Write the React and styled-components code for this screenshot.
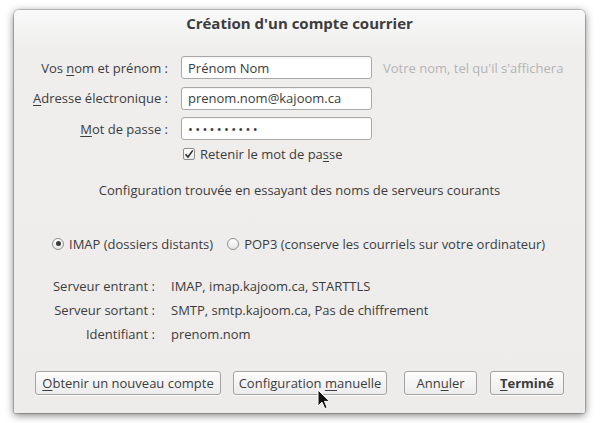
import styled, { createGlobalStyle } from "styled-components";

const GlobalStyle = createGlobalStyle`
  html, body {
    margin: 0;
    padding: 0;
    background: #ffffff;
  }
  body {
    font-family: "Open Sans", "Liberation Sans", sans-serif;
    font-size: 13px;
    color: #3c3c3c;
  }
`;

const Screen = styled.div`
  width: 600px;
  height: 423px;
  padding: 10px 15px 0 14px;
  box-sizing: border-box;
  position: relative;
  overflow: hidden;
`;

const Dialog = styled.div`
  width: 571px;
  height: 403px;
  box-sizing: border-box;
  padding: 4px 0 0;
  display: flex;
  flex-direction: column;
  border-radius: 5px 5px 2px 2px;
  background: linear-gradient(#f9f9f9 0px, #efeeed 40px, #edeceb 100%);
  box-shadow: 0 0 0 1px rgba(0, 0, 0, 0.18), 0 2px 9px rgba(0, 0, 0, 0.55);
`;

const Title = styled.div`
  height: 18px;
  line-height: 18px;
  text-align: center;
  font-weight: bold;
  font-size: 15px;
  color: #3c3c3c;
`;

const Form = styled.div`
  margin-top: 24px;
  display: grid;
  grid-template-columns: 156px 191px 1fr;
  column-gap: 11px;
  row-gap: 7.5px;
  align-items: center;
`;

const Label = styled.label`
  text-align: right;
  padding-right: 2px;
  white-space: nowrap;
`;

const Key = styled.span`
  text-decoration: underline;
  text-underline-offset: 2px;
`;

const Field = styled.input`
  height: 23px;
  box-sizing: border-box;
  border: 1px solid #a9a9a9;
  border-radius: 3px;
  background: #ffffff;
  padding: 0 6px;
  font-family: inherit;
  font-size: 13px;
  color: #3c3c3c;
  letter-spacing: ${(p) => (p.$spread ? "2.3px" : "0")};
  box-shadow: inset 0 1px 1px rgba(0, 0, 0, 0.06);
  outline: none;
`;

const Hint = styled.span`
  color: #b4b4b4;
  white-space: nowrap;
`;

const CheckRow = styled.div`
  grid-column: 2 / 4;
  display: flex;
  align-items: center;
  gap: 5px;
  padding-left: 2px;
  height: 13px;
`;

const Box = styled.span`
  width: 12px;
  height: 12px;
  box-sizing: border-box;
  border: 1px solid #8c8c8c;
  border-radius: 2px;
  background: linear-gradient(#ffffff, #e9e9e9);
  display: flex;
  align-items: center;
  justify-content: center;
`;

const Notice = styled.div`
  margin-top: 21px;
  line-height: 16px;
  text-align: center;
`;

const RadioRow = styled.div`
  margin-top: 38px;
  padding-left: 38px;
  display: flex;
  align-items: center;
  line-height: 16px;
`;

const RadioItem = styled.div`
  display: flex;
  align-items: center;
  gap: 5px;
  margin-right: 14px;
`;

const Radio = styled.span`
  width: 12px;
  height: 12px;
  box-sizing: border-box;
  border-radius: 50%;
  border: 1px solid #8e8e8e;
  background: linear-gradient(#ffffff, #e6e6e6);
  display: flex;
  align-items: center;
  justify-content: center;
  &::after {
    content: "";
    width: 5px;
    height: 5px;
    border-radius: 50%;
    background: ${(p) => (p.$on ? "#3a3a3a" : "transparent")};
  }
`;

const Servers = styled.div`
  margin-top: 26px;
  display: grid;
  grid-template-columns: 141px 1fr;
  column-gap: 16px;
  row-gap: 8px;
  line-height: 16px;
`;

const ServerLabel = styled.span`
  text-align: right;
  white-space: nowrap;
`;

const Buttons = styled.div`
  margin-top: 29px;
  padding: 0 21px;
  display: flex;
  align-items: center;
`;

const Button = styled.button`
  width: ${(p) => p.$w}px;
  margin-left: ${(p) => p.$gap || 0}px;
  height: 24px;
  box-sizing: border-box;
  padding: 0;
  border: 1px solid #a3a3a3;
  border-radius: 3px;
  background: linear-gradient(#fcfcfc, #ececec);
  box-shadow: 0 1px 0 rgba(255, 255, 255, 0.8), inset 0 1px 0 #ffffff;
  font-family: inherit;
  font-size: 13px;
  font-weight: ${(p) => (p.$bold ? "bold" : "normal")};
  color: #3c3c3c;
  white-space: nowrap;
`;

const Cursor = styled.svg`
  position: absolute;
  left: 317px;
  top: 389px;
`;

function App() {
  return (
    <Screen>
      <GlobalStyle />
      <Dialog>
        <Title>Création d'un compte courrier</Title>
        <Form>
          <Label>
            Vos <Key>n</Key>om et prénom :
          </Label>
          <Field readOnly defaultValue="Prénom Nom" />
          <Hint>Votre nom, tel qu'il s'affichera</Hint>

          <Label>
            <Key>A</Key>dresse électronique :
          </Label>
          <Field readOnly defaultValue="prenom.nom@kajoom.ca" />
          <span />

          <Label>
            <Key>M</Key>ot de passe :
          </Label>
          <Field type="password" readOnly defaultValue="motdepasse" $spread />
          <span />

          <span />
          <CheckRow>
            <Box>
              <svg width="10" height="10" viewBox="0 0 10 10">
                <path
                  d="M1.5 5.2 L4 8 L8.8 1.4"
                  fill="none"
                  stroke="#2e2e2e"
                  strokeWidth="1.6"
                />
              </svg>
            </Box>
            <span>
              Retenir le mot de pa<Key>s</Key>se
            </span>
          </CheckRow>
        </Form>

        <Notice>Configuration trouvée en essayant des noms de serveurs courants</Notice>

        <RadioRow>
          <RadioItem>
            <Radio $on />
            <span>IMAP (dossiers distants)</span>
          </RadioItem>
          <RadioItem>
            <Radio />
            <span>POP3 (conserve les courriels sur votre ordinateur)</span>
          </RadioItem>
        </RadioRow>

        <Servers>
          <ServerLabel>Serveur entrant :</ServerLabel>
          <span>IMAP, imap.kajoom.ca, STARTTLS</span>
          <ServerLabel>Serveur sortant :</ServerLabel>
          <span>SMTP, smtp.kajoom.ca, Pas de chiffrement</span>
          <ServerLabel>Identifiant :</ServerLabel>
          <span>prenom.nom</span>
        </Servers>

        <Buttons>
          <Button $w={186}>
            <Key>O</Key>btenir un nouveau compte
          </Button>
          <Button $w={154} $gap={12}>
            Configuration <Key>m</Key>anuelle
          </Button>
          <Button $w={73} $gap={17}>
            Ann<Key>u</Key>ler
          </Button>
          <Button $w={74} $gap={13} $bold>
            <Key>T</Key>erminé
          </Button>
        </Buttons>
      </Dialog>
      <Cursor width="14" height="22" viewBox="0 0 14 22">
        <path
          d="M1 1 L1 17 L5 13.2 L7.8 19.6 L10.2 18.6 L7.5 12.4 L12.6 12.4 Z"
          fill="#111111"
          stroke="#ffffff"
          strokeWidth="1"
          strokeLinejoin="round"
        />
      </Cursor>
    </Screen>
  );
}

export default App;
